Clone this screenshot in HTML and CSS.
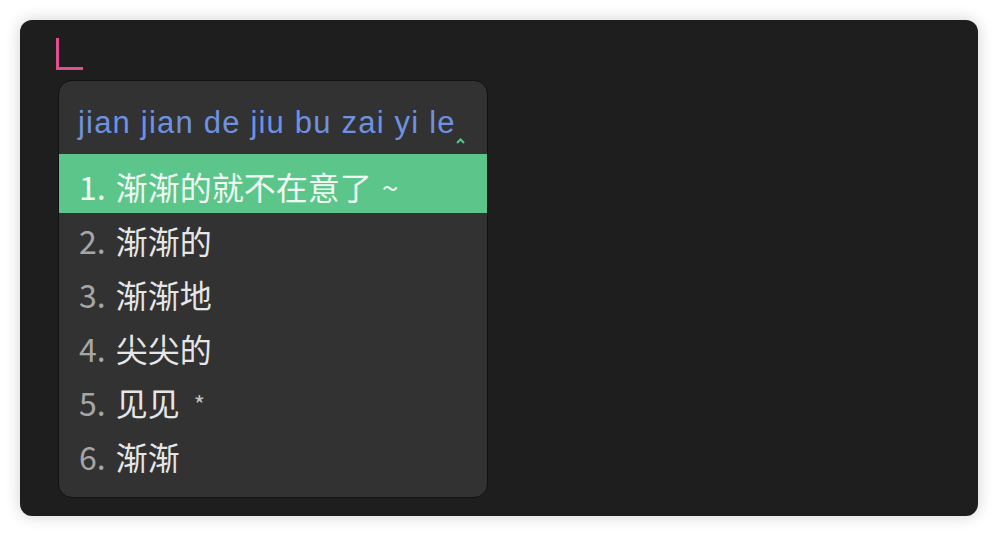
FILE: index.html
```html
<!DOCTYPE html>
<html>
<head>
<meta charset="utf-8">
<link rel="stylesheet" href="styles.css">
</head>
<body>
<div class="window">
  <div class="cursor"></div>
  <div class="popup">
    <div class="preedit"><span class="pin">jian jian de jiu bu zai yi le</span><svg class="caret" width="9" height="6" viewBox="0 0 9 6"><path d="M1 5 L4.5 1.5 L8 5" fill="none" stroke="#5cc48a" stroke-width="2"/></svg></div>
    <div class="row active"><span class="num">1.</span><span class="cand">渐渐的就不在意了</span><span class="mark tilde">~</span></div>
    <div class="row"><span class="num">2.</span><span class="cand">渐渐的</span></div>
    <div class="row"><span class="num">3.</span><span class="cand">渐渐地</span></div>
    <div class="row"><span class="num">4.</span><span class="cand">尖尖的</span></div>
    <div class="row"><span class="num">5.</span><span class="cand">见见</span><span class="mark star">*</span></div>
    <div class="row"><span class="num">6.</span><span class="cand">渐渐</span></div>
  </div>
</div>
</body>
</html>
```

FILE: styles.css
```css
html, body {
  margin: 0;
  padding: 0;
  background: #ffffff;
}
body {
  width: 998px;
  height: 536px;
  padding: 20px;
  box-sizing: border-box;
  font-family: "Liberation Sans", "Noto Sans CJK SC", sans-serif;
}
.window {
  width: 958px;
  height: 496px;
  background: #1e1e1e;
  border-radius: 12px;
  box-shadow: 0 0 16px rgba(0, 0, 0, 0.18);
  padding: 18px 0 0 36px;
  box-sizing: border-box;
}
.cursor {
  width: 24px;
  height: 29px;
  border-left: 3px solid #e0508e;
  border-bottom: 3px solid #e0508e;
}
.popup {
  margin: 10px 0 0 2px;
  width: 430px;
  height: 418px;
  box-sizing: border-box;
  background: #323232;
  border: 1px solid #111111;
  border-radius: 14px;
  overflow: hidden;
}
.preedit {
  height: 73px;
  box-sizing: border-box;
  padding: 22px 0 0 19px;
  color: #6e92e0;
  font-family: "Liberation Sans", sans-serif;
  font-size: 31px;
  letter-spacing: 1.2px;
  line-height: 40px;
  display: flex;
  align-items: flex-start;
}
.caret {
  margin-top: 35px;
  margin-left: 0;
}
.row {
  height: 54px;
  box-sizing: border-box;
  display: flex;
  align-items: center;
  padding-left: 20px;
  font-family: "Noto Sans CJK SC", sans-serif;
  font-size: 32px;
  color: #e6e6e6;
}
.row.active {
  height: 59px;
  padding-top: 5px;
  background: #5bc58a;
  color: #effaf3;
}
.num {
  color: #a6a6a6;
  margin-right: 10px;
}
.row.active .num {
  color: #effaf3;
}
.mark {
  margin-left: 10px;
  font-size: 30px;
}
.star {
  color: #c4c4c4;
  font-size: 24px;
  margin-left: 14px;
  margin-top: 2px;
}
```
